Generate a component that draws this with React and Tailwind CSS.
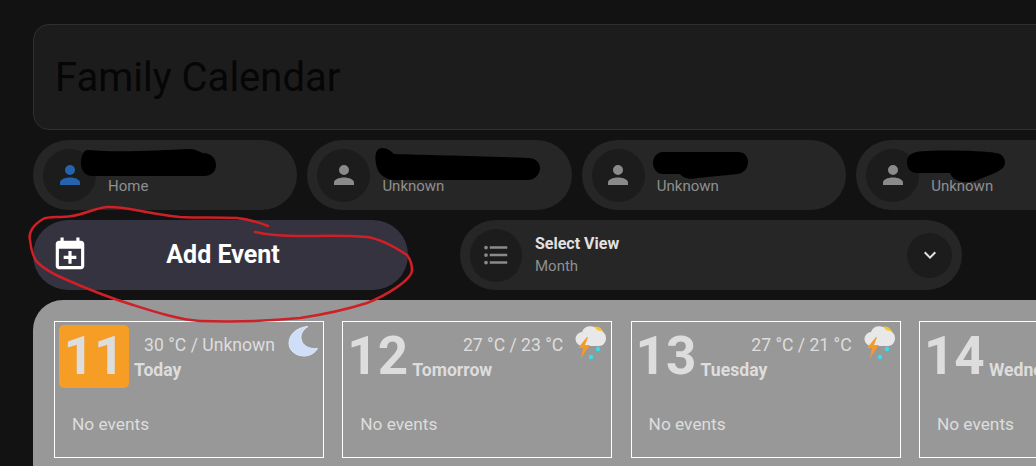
import React from "react";

const P = {
  person: "M12,4A4,4 0 0,1 16,8A4,4 0 0,1 12,12A4,4 0 0,1 8,8A4,4 0 0,1 12,4M12,14C16.42,14 20,15.79 20,18V20H4V18C4,15.79 7.58,14 12,14Z",
  cal: "M19 19V8H5V19H19M16 1H18V3H19C20.11 3 21 3.9 21 5V19C21 20.11 20.11 21 19 21H5C3.89 21 3 20.1 3 19V5C3 3.89 3.9 3 5 3H6V1H8V3H16V1M11 9.5H13V12.5H16V14.5H13V17.5H11V14.5H8V12.5H11V9.5Z",
  list: "M7,5H21V7H7V5M7,13V11H21V13H7M4,4.5A1.5,1.5 0 0,1 5.5,6A1.5,1.5 0 0,1 4,7.5A1.5,1.5 0 0,1 2.5,6A1.5,1.5 0 0,1 4,4.5M4,10.5A1.5,1.5 0 0,1 5.5,12A1.5,1.5 0 0,1 4,13.5A1.5,1.5 0 0,1 2.5,12A1.5,1.5 0 0,1 4,10.5M7,19V17H21V19H7M4,16.5A1.5,1.5 0 0,1 5.5,18A1.5,1.5 0 0,1 4,19.5A1.5,1.5 0 0,1 2.5,18A1.5,1.5 0 0,1 4,16.5Z",
  chev: "M7.41,8.58L12,13.17L16.59,8.58L18,10L12,16L6,10L7.41,8.58Z",
};

function Icon({ d, size, className }) {
  return (
    <svg width={size} height={size} viewBox="0 0 24 24" className={className} fill="currentColor">
      <path d={d} />
    </svg>
  );
}

function Chip({ status, home }) {
  return (
    <div className="flex-none w-[264.4px] h-[70px] rounded-[35px] bg-[#262626] flex items-center pl-[10px] gap-[12px]">
      <div className="w-[53px] h-[53px] rounded-full bg-[#1c1c1c] flex items-center justify-center">
        <Icon d={P.person} size={30} className={home ? "text-[#2463ad]" : "text-[#8a8a8a]"} />
      </div>
      <div className="pt-[22px] text-[15px] leading-[20px] text-[#8f8f8f]">{status}</div>
    </div>
  );
}

function Moon() {
  return (
    <svg width="32" height="32" viewBox="0 0 32 32" className="flex-none">
      <path d="M21 1.5C12 2 2 8 2 18c0 8 7 13 15 13 6 0 11-3 13.500-7.500C23 24.500 15 21 14 13.500 13.500 9 16 4.500 21 1.500Z" fill="#cfdff8" stroke="#dce8fb" strokeWidth="1" />
    </svg>
  );
}

function Storm() {
  return (
    <svg width="32" height="36" viewBox="0 0 32 36" className="flex-none">
      <circle cx="21" cy="9" r="7.500" fill="#f7c52e" />
      <path d="M8 21a7 7 0 0 1-1-14 8.500 8.500 0 0 1 15.500-1.500A7.500 7.500 0 0 1 31 13c0 4.500-3 8-7 8Z" fill="#e8e8e8" />
      <path d="M12 12 3 23h5l-2 10 9-13h-5l3-8Z" fill="#f59a28" />
      <circle cx="23" cy="24" r="2.200" fill="#2fe0f0" />
      <circle cx="16" cy="32" r="2.200" fill="#2fe0f0" />
    </svg>
  );
}

function Day({ num, label, temp, icon, today }) {
  return (
    <div className="flex-none w-[270px] h-[137px] border border-white px-[4px] pt-[3px]">
      <div className="flex">
        {today ? (
          <div className="flex-none w-[70px] h-[63px] rounded-[5px] bg-[#f59d24] flex items-center justify-center text-[53px] leading-[63px] font-bold text-[#dddddd] mr-[5px]">
            {num}
          </div>
        ) : (
          <div className="flex-none w-[65px] h-[63px] text-[53px] leading-[63px] font-bold text-[#dddddd]">{num}</div>
        )}
        <div className="flex-1 min-w-0">
          <div className="h-[36px] flex items-start justify-end">
            <div className="pt-[8px] text-[17.6px] leading-[24px] text-[#dddddd] whitespace-nowrap">{temp}</div>
            <div className="w-[44px] flex-none pl-[12px]">{icon}</div>
          </div>
          <div className="-mt-[3px] text-[17.6px] leading-[24px] font-bold text-[#dddddd] whitespace-nowrap">{label}</div>
        </div>
      </div>
      <div className="mt-[24px] pl-[13px] text-[17.3px] leading-[24px] text-[#dddddd]">No events</div>
    </div>
  );
}

export default function App() {
  return (
    <div className="relative w-[1036px] h-[466px] overflow-hidden bg-[#121212] font-['Roboto',sans-serif]">
      <div className="w-[1500px] pl-[33px] pt-[24px] flex flex-col">
        <div className="h-[106px] rounded-[16px] border border-[#2f2f2f] bg-[#1c1c1c] flex items-center pl-[21px] pt-[2px]">
          <h1 className="text-[40px] leading-[48px] font-normal text-[#060606]">Family Calendar</h1>
        </div>

        <div className="mt-[10px] flex gap-[10px]">
          <Chip status="Home" home />
          <Chip status="Unknown" />
          <Chip status="Unknown" />
          <Chip status="Unknown" />
        </div>

        <div className="mt-[10px] flex gap-[52px]">
          <div className="flex-none w-[375px] h-[70px] rounded-[35px] bg-[#353340] flex items-center pl-[18px] pr-[51px] text-white">
            <Icon d={P.cal} size={38} className="flex-none" />
            <div className="flex-1 text-center text-[25px] leading-[30px] font-bold">Add Event</div>
          </div>
          <div className="flex-none w-[502px] h-[70px] rounded-[35px] bg-[#262626] flex items-center pl-[10px] pr-[10px] gap-[13px]">
            <div className="w-[52px] h-[53px] rounded-full bg-[#1c1c1c] flex items-center justify-center">
              <Icon d={P.list} size={30} className="text-[#8a8a8a]" />
            </div>
            <div className="flex-1">
              <div className="text-[16px] leading-[20px] font-bold text-[#e1e1e1]">Select View</div>
              <div className="mt-[2px] text-[15px] leading-[20px] text-[#8f8f8f]">Month</div>
            </div>
            <div className="w-[45px] h-[45px] rounded-full bg-[#1c1c1c] flex items-center justify-center">
              <Icon d={P.chev} size={24} className="text-[#e1e1e1]" />
            </div>
          </div>
        </div>

        <div className="mt-[10px] h-[300px] rounded-tl-[30px] bg-[#989898] pl-[21px] pt-[21px] flex gap-[18.3px]">
          <Day num="11" label="Today" temp="30 °C / Unknown" icon={<Moon />} today />
          <Day num="12" label="Tomorrow" temp="27 °C / 23 °C" icon={<Storm />} />
          <Day num="13" label="Tuesday" temp="27 °C / 21 °C" icon={<Storm />} />
          <Day num="14" label="Wednesday" temp="27 °C / 22 °C" icon={<Storm />} />
        </div>
      </div>

      {/* hand-drawn marks on top of the screenshot */}
      <svg className="absolute inset-0 pointer-events-none" width="1036" height="466" viewBox="0 0 1036 466">
        <g fill="#000">
          <path d="M88 150C120 153 160 150 190 149c6 0 9 3 13 4 8 0 13 5 13 12s-5 11-12 11H92c-6 0-11-5-11-12s2-14 7-14Z" />
          <path d="M382 148c5 0 9 3 12 6 30 1 80 2 134 4 7 0 12 4 12 10s-5 12-12 12H395c-10 0-16-6-18-12-3-10-2-20 5-20Z" />
          <path d="M663 152h75c6 0 10 4 10 10s-4 11-10 12l-40 4c-8 2-15 0-18-4h-17c-6 0-10-5-10-11s4-11 10-11Z" />
          <path d="M927 151c25-1 58 0 68 2 6 0 10 4 10 10 0 4-4 7-10 10l-20 8c-12 3-22 0-25-8h-33c-6 0-10-4-10-11s5-11 20-11Z" />
        </g>
        <path
          d="M268 226C255 221 248 219 237 218C215 217 200 218 180 217C150 214 125 206 107 207C95 208 85 214 72 216C58 218 48 216 43 219C33 225 28 233 30 240C31 250 34 258 37 262C45 270 55 275 67 280C90 290 110 298 133 305C155 312 180 320 200 321C235 322 270 321 300 318C320 315 345 310 367 303C385 296 412 280 412 270C412 264 410 259 407 255C395 247 380 239 367 237C345 235 320 236 300 236C285 236 268 235 255 232"
          fill="none"
          stroke="#cf2027"
          strokeWidth="2.500"
          strokeLinecap="round"
        />
      </svg>
    </div>
  );
}
